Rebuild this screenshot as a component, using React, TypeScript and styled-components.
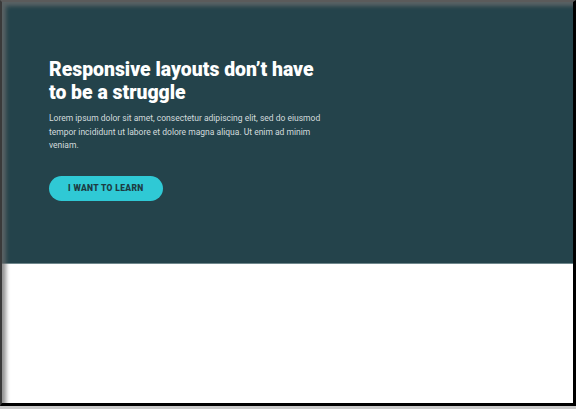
import React from "react";
import styled, { createGlobalStyle } from "styled-components";

const GlobalStyle = createGlobalStyle`
  html, body { margin: 0; padding: 0; }
  body {
    background: #c9c9c9;
    font-family: Roboto, "Noto Sans", sans-serif;
    width: 576px;
    height: 409px;
    overflow: hidden;
  }
`;

const Frame = styled.div`
  position: relative;
  box-sizing: border-box;
  width: 576px;
  height: 406px;
  background: #ffffff;
  border-top: 2px solid #5b5b5b;
  border-left: 2px solid #3a3a3a;
  border-right: 3px solid #000;
  border-bottom: 3px solid #000;
  display: flex;
  flex-direction: column;
  overflow: hidden;

  &::after {
    content: "";
    position: absolute;
    inset: 0;
    pointer-events: none;
    box-shadow: inset 5px 5px 4px -1px rgba(110, 110, 110, 0.75);
  }
`;

const Hero = styled.section`
  background: #24434b;
  height: 262px;
  box-sizing: border-box;
  padding: 56px 0 0 47px;
  display: flex;
  flex-direction: column;
  align-items: flex-start;
  border-bottom: 1px solid #6f878c;
`;

const Title = styled.h1`
  margin: 0;
  color: #ffffff;
  font-family: Roboto, sans-serif;
  font-weight: 900;
  font-size: 19.4px;
  line-height: 23px;
  width: 275px;
`;

const Lead = styled.p`
  margin: 8px 0 0;
  color: #d3dcde;
  font-family: Roboto, sans-serif;
  font-size: 8.5px;
  line-height: 13.5px;
  width: 275px;
`;

const CTA = styled.button`
  margin-top: 23px;
  height: 25px;
  padding: 0 19px;
  border: none;
  border-radius: 13px;
  background: #2fc9d5;
  color: #1d3c43;
  font-family: Roboto, sans-serif;
  font-weight: 900;
  font-size: 8.5px;
  letter-spacing: 0.35px;
  text-transform: uppercase;
  cursor: pointer;
`;

const Body = styled.main`
  flex: 1;
  background: #ffffff;
`;

export default function App() {
  return (
    <>
      <GlobalStyle />
      <Frame>
        <Hero>
          <Title>Responsive layouts don’t have to be a struggle</Title>
          <Lead>
            Lorem ipsum dolor sit amet, consectetur adipiscing elit, sed do eiusmod tempor
            incididunt ut labore et dolore magna aliqua. Ut enim ad minim veniam.
          </Lead>
          <CTA>I want to learn</CTA>
        </Hero>
        <Body />
      </Frame>
    </>
  );
}
